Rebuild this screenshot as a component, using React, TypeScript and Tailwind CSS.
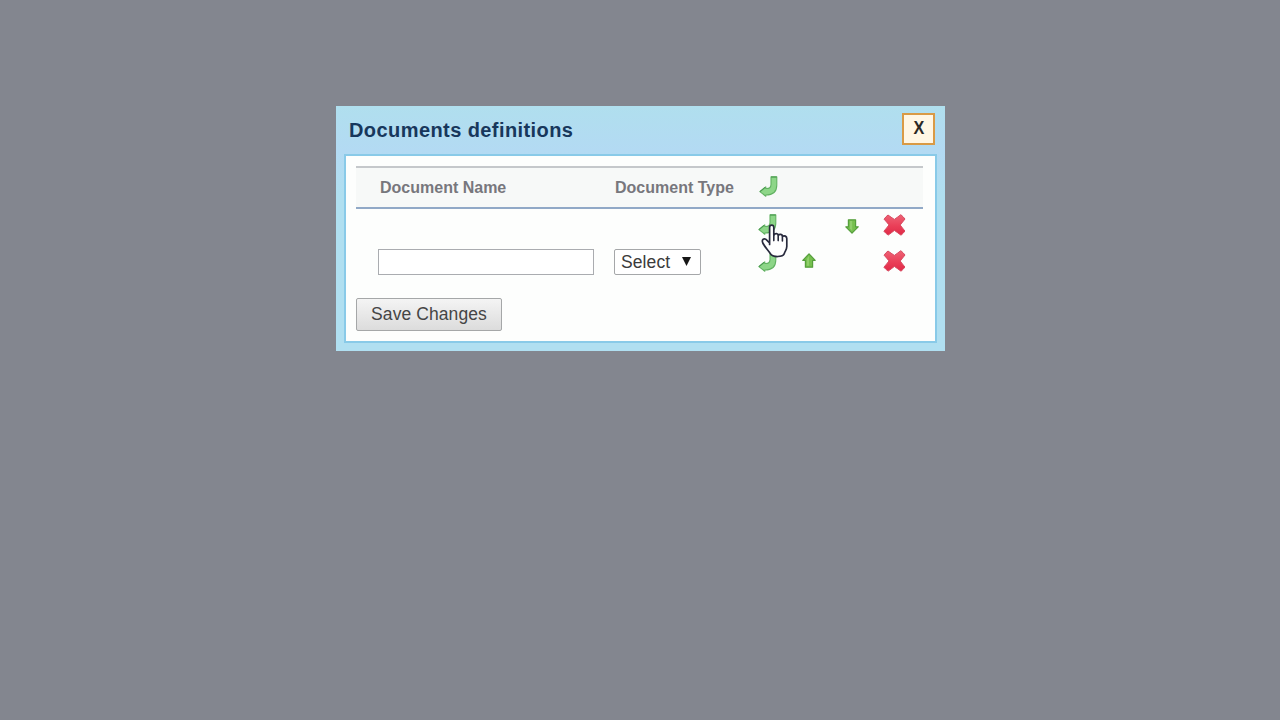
import React from "react";

function InsertIcon() {
  return (
    <svg width="20" height="21" viewBox="0 0 20 21" className="block">
      <path
        d="M12 .9 H17.8 V9 C17.8 15.4 13.8 19 6.8 19 V20.3 L.9 15.6 L6.8 10.9 V12.5 C10.4 12.7 12 11.5 12 8.6 Z"
        fill="#8dd688"
        stroke="#62b262"
        strokeWidth="1.1"
        strokeLinejoin="round"
      />
      <path d="M12 1 H17.7 M.9 15.6 L6 11.4" fill="none" stroke="#4a9a50" strokeWidth="1.1" />
    </svg>
  );
}

function UpIcon() {
  return (
    <svg width="14" height="15" viewBox="0 0 14 15" className="block">
      <path
        d="M7 .8 L13.2 7.4 H10.6 V14.2 H3.4 V7.4 H.8 Z"
        fill="#76c04f"
        stroke="#569f3d"
        strokeWidth="1.2"
        strokeLinejoin="round"
      />
      <path d="M7 2.8 L5 5.8 V12.8 H7 Z" fill="#90ce6c" />
    </svg>
  );
}

function DownIcon() {
  return (
    <svg width="14" height="15" viewBox="0 0 14 15" className="block">
      <path
        d="M7 14.2 L13.2 7.8 H10.6 V.8 H3.4 V7.8 H.8 Z"
        fill="#76c04f"
        stroke="#569f3d"
        strokeWidth="1.2"
        strokeLinejoin="round"
      />
      <path d="M5 2 H7.2 V12 L5 9.6 Z" fill="#90ce6c" />
    </svg>
  );
}

function DeleteIcon() {
  return (
    <svg width="23" height="22" viewBox="0 0 23 22" className="block">
      <defs>
        <linearGradient id="cross" x1="0" y1="0" x2="0" y2="1">
          <stop offset="0" stopColor="#ee6375" />
          <stop offset=".55" stopColor="#ea3f58" />
          <stop offset="1" stopColor="#e02a47" />
        </linearGradient>
      </defs>
      <path
        d="M5 1 Q8 3.2 11.4 5.4 Q14.8 3 17.8 .7 Q20.2 2.6 22 5 Q19.6 8 17.2 11 Q19.4 14 21.9 17 Q20.3 19.4 18 21.2 Q14.8 18.8 11.4 16.4 Q8.4 18.8 5.2 21.1 Q2.8 19.5 .9 17.2 Q3.7 14 6 10.9 Q3.7 8.1 1.1 5.2 Q2.8 2.6 5 1 Z"
        fill="url(#cross)"
        stroke="#d74a60"
        strokeWidth="1"
        strokeLinejoin="round"
      />
    </svg>
  );
}

function HandCursor() {
  return (
    <svg width="27" height="34" viewBox="0 0 27 34" className="absolute left-[761px] top-[224px]">
      <path
        d="M8.6 20.4 V3.4 C8.6 .4 12.8 .4 12.8 3.4 V11 C14 9 17 9.2 17.4 11.2 C18.6 9.8 21.2 10.2 21.6 12.2 C23.4 11.2 25.8 12.2 25.8 14.6 V22.6 C25.8 25.5 24.2 27 23.4 29.2 C22.2 33.4 11.6 33.8 9.2 29.4 C7.6 26.6 4 23.4 1.8 19 C.4 15.8 2.8 13.8 5 15.4 L8.6 19 Z"
        fill="#fff"
        stroke="#282a3d"
        strokeWidth="1.7"
        strokeLinejoin="round"
      />
      <path d="M12.8 10 V16.6 M17.2 10.8 V16.6 M21.4 12 V17" stroke="#282a3d" strokeWidth="1.6" strokeLinecap="round" />
    </svg>
  );
}

export default function App() {
  return (
    <main className="relative h-screen w-full overflow-hidden bg-[#83868f] pt-[106px] font-['Liberation_Sans',sans-serif]">
      <section className="ml-[336px] h-[245px] w-[609px] bg-[linear-gradient(#b0dfee,#b3daf3_45px,#b0dff0_90px,#b0dff1)] px-2 pt-px">
        <header className="flex h-[47px] items-center justify-between pl-[5px]">
          <h1 className="whitespace-nowrap pb-px text-[20px] font-bold tracking-[0.42px] text-[#17375c]">Documents definitions</h1>
          <button className="mr-0.5 mb-1 flex h-8 w-[33px] items-center justify-center border-2 border-[#d99a45] bg-[#fff6e4] pl-0.5 text-[18px] font-bold text-[#2b2825]">
            <span className="scale-x-90">X</span>
          </button>
        </header>
        <div className="h-[189px] w-[593px] border-2 border-[#89cae8] bg-[#fdfefd] pr-3 pl-[10px] pt-[10px]">
          <div className="grid h-[43px] grid-cols-[259px_144px_1fr] items-center border-t-2 border-b-2 border-t-[#c5c8cb] border-b-[#91a9c7] bg-[#f7f9f8] text-base font-bold text-[#77777d]">
            <span className="whitespace-nowrap pt-px pl-6">Document Name</span>
            <span className="whitespace-nowrap pt-px">Document Type</span>
            <div className="pb-[3px]"><InsertIcon /></div>
          </div>
          <div className="grid h-[34px] grid-cols-[402px_45px_42px_38px_1fr] items-center">
            <span />
            <div className="pb-1"><InsertIcon /></div>
            <span />
            <DownIcon />
            <div className="pb-0.5"><DeleteIcon /></div>
          </div>
          <div className="grid h-[37px] grid-cols-[258px_144px_44px_81px_1fr] items-center">
            <input className="ml-[22px] h-[26px] w-[216px] border-[1.5px] border-[#aaacb0] bg-white px-1 text-base outline-none" aria-label="Document name" />
            <button className="flex h-[26px] w-[87px] items-center justify-between rounded-xs border border-[#a5a7a9] bg-white pr-[9px] pl-[6px] text-[17.5px] tracking-[0.1px] text-[#3b3b3b]">
              <span className="pt-px">Select</span>
              <svg width="9" height="9" viewBox="0 0 9 9"><path d="M0 0H9L4.5 9Z" fill="#171717" /></svg>
            </button>
            <div className="pb-px"><InsertIcon /></div>
            <div className="pb-0.5"><UpIcon /></div>
            <div className="pb-0.5"><DeleteIcon /></div>
          </div>
          <button className="mt-[18px] flex h-[33px] w-[146px] items-center justify-center rounded-xs border-[1.5px] border-[#a5a7a8] bg-linear-to-b from-[#f4f4f4] to-[#dcdcdc] pb-px text-[17.5px] tracking-[0.08px] whitespace-nowrap text-[#454545]">
            Save Changes
          </button>
        </div>
      </section>
      <HandCursor />
    </main>
  );
}
